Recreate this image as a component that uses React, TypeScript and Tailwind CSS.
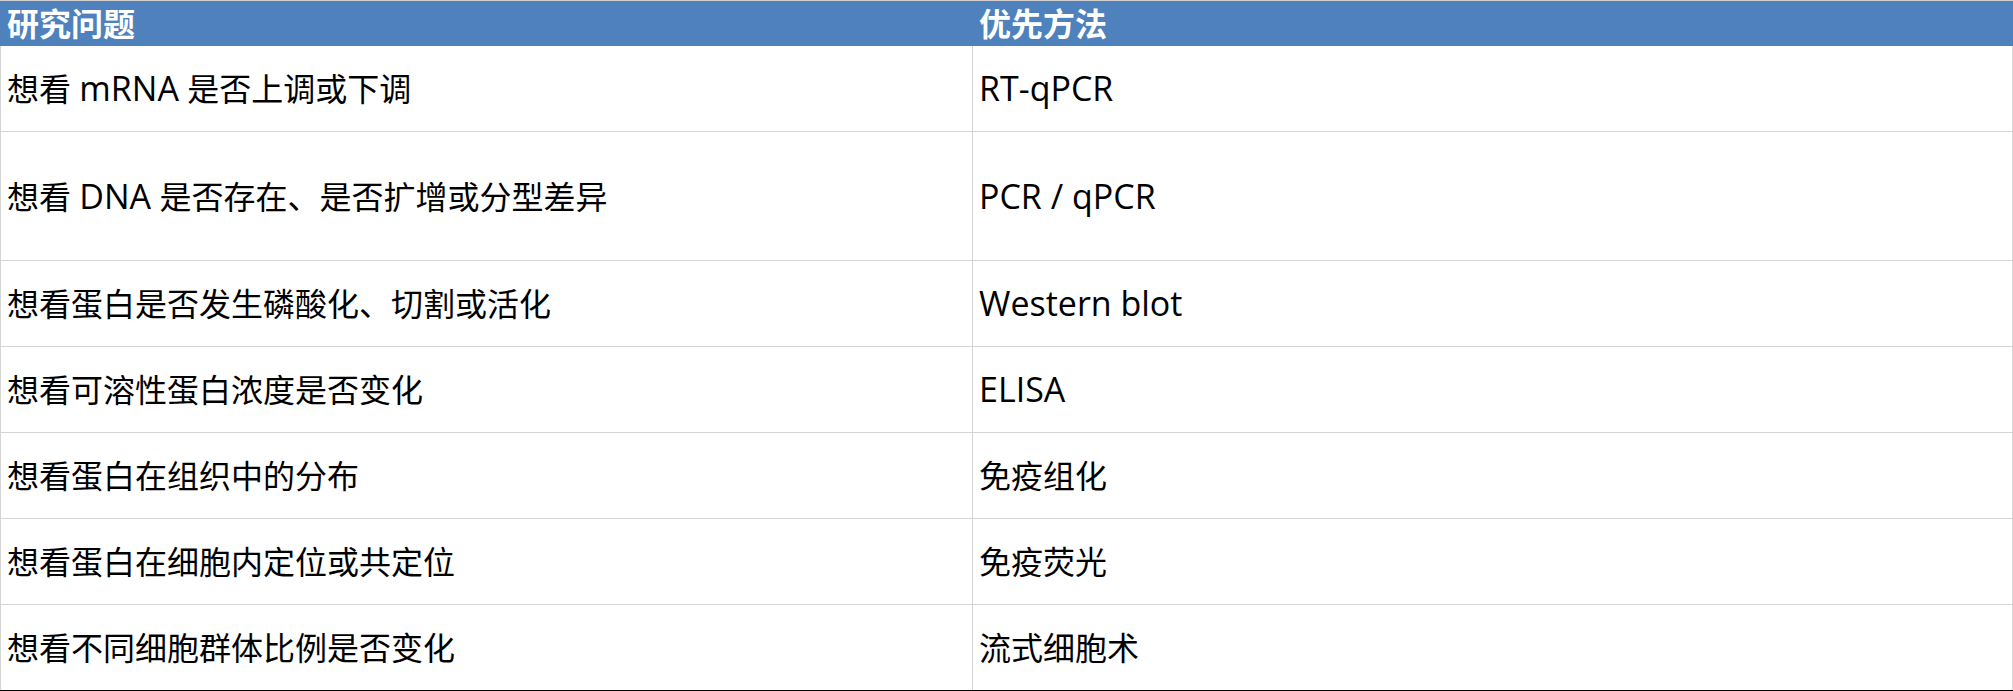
import React from "react";

const rows: { q: React.ReactNode; m: React.ReactNode; h: string; last?: boolean }[] = [
  {
    q: (
      <>
        想看 <span className="text-[34px]">mRNA</span> 是否上调或下调
      </>
    ),
    m: <span className="text-[34px]">RT-qPCR</span>,
    h: "h-[86px]",
  },
  {
    q: (
      <>
        想看 <span className="text-[34px]">DNA</span> 是否存在、是否扩增或分型差异
      </>
    ),
    m: <span className="text-[34px]">PCR / qPCR</span>,
    h: "h-[129px]",
  },
  { q: "想看蛋白是否发生磷酸化、切割或活化", m: <span className="text-[34px]">Western blot</span>, h: "h-[86px]" },
  { q: "想看可溶性蛋白浓度是否变化", m: <span className="text-[34px]">ELISA</span>, h: "h-[86px]" },
  { q: "想看蛋白在组织中的分布", m: "免疫组化", h: "h-[86px]" },
  { q: "想看蛋白在细胞内定位或共定位", m: "免疫荧光", h: "h-[86px]" },
  { q: "想看不同细胞群体比例是否变化", m: "流式细胞术", h: "h-[86px]", last: true },
];

export default function App() {
  return (
    <div
      className="w-[2013px] h-[691px] bg-white border-t border-[#d0d0d0] text-black"
      style={{ fontFamily: '"Open Sans", "Noto Sans CJK SC", sans-serif' }}
    >
      <div className="flex h-[45px] bg-[#4f81bd] text-white font-bold text-[32px] leading-none">
        <div className="w-[973px] pl-[7px] flex items-center">研究问题</div>
        <div className="flex-1 pl-[6px] flex items-center">优先方法</div>
      </div>
      {rows.map((r, i) => (
        <div
          key={i}
          className={`flex ${r.h} border-b ${r.last ? "border-black" : "border-[#d4d4d4]"} text-[32px]`}
        >
          <div className="w-[973px] border-l border-r border-[#d4d4d4] pl-[6px] flex items-center">
            <div>{r.q}</div>
          </div>
          <div className="flex-1 border-r border-[#d4d4d4] pl-[6px] flex items-center">
            <div>{r.m}</div>
          </div>
        </div>
      ))}
    </div>
  );
}
